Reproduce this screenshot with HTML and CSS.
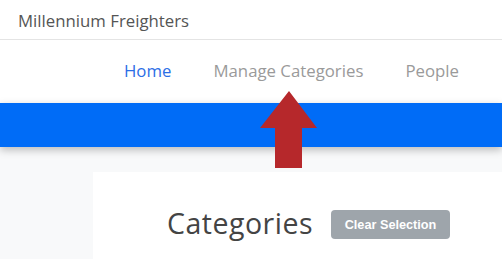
FILE: index.html
```html
<!DOCTYPE html>
<html>
<head>
  <meta charset="UTF-8">
  <title>Millennium Freighters</title>
  <link rel="stylesheet" href="styles.css">
</head>
<body>

  <div class="topbar">Millennium Freighters</div>

  <nav class="nav">
    <a class="active" href="#">Home</a>
    <a href="#">Manage Categories</a>
    <a href="#">People</a>
  </nav>

  <div class="banner"></div>

  <div class="main">
    <div class="card">
      <h1>Categories</h1>
      <button class="btn-clear">Clear Selection</button>
    </div>
  </div>

  <!-- pointer to the nav item -->
  <svg class="arrow" width="58" height="80" viewBox="0 0 58 80">
    <polygon points="29,0 57,37 42,37 42,77 15,77 15,37 0,37" fill="#b6282b"/>
  </svg>

</body>
</html>
```

FILE: styles.css
```css
body { margin: 0; font-family: "Open Sans", "Liberation Sans", sans-serif; background: #f8f9fa; }
.topbar { height: 39px; line-height: 41px; padding-left: 18px; font-size: 16.8px; color: #555; background: white; border-bottom: 1px solid #e4e4e4; }
.nav { height: 60px; padding-bottom: 3px; display: flex; align-items: center; gap: 42px; padding-left: 124px; background: white; }
.nav a { font-size: 16.8px; color: #9a9a9a; text-decoration: none; }
.nav a.active { color: #2b6ee6; }
.banner { height: 44px; background: #006cf7; box-shadow: 0 3px 8px rgba(0,0,0,0.25); position: relative; }
.main { padding: 25px 0 0 93px; }
.card { background: white; height: 54px; display: flex; align-items: flex-start; padding: 33px 0 0 74px; gap: 18px; }
.card h1 { margin: 0; font-size: 28.5px; font-weight: 400; color: #444; letter-spacing: 0.5px; line-height: 36px; }
.btn-clear { margin-top: 5px; height: 29px; width: 119px; border: none; border-radius: 4px; background: #9ea5ab; color: white; font-family: "Liberation Sans", Arial, sans-serif; font-weight: bold; font-size: 12.7px; }
.arrow { position: absolute; left: 260px; top: 91px; }
```
